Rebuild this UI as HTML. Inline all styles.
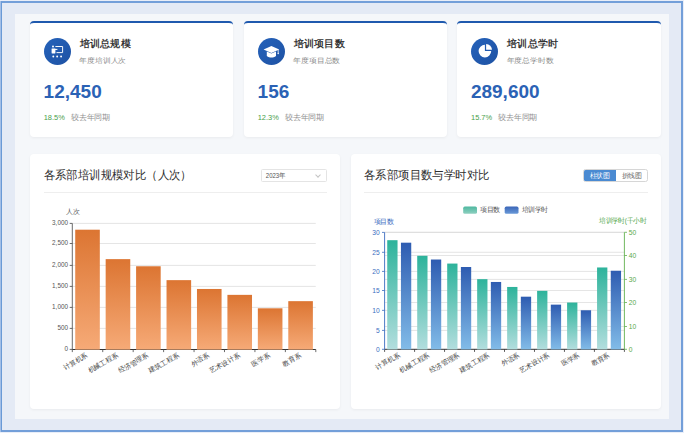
<!DOCTYPE html>
<html><head><meta charset="utf-8"><style>
html,body{margin:0;padding:0;background:#e9eef8;width:684px;height:433px;overflow:hidden;font-family:"Liberation Sans", sans-serif;}
.frame{position:absolute;left:1px;top:1px;width:682px;height:431px;box-sizing:border-box;border:2px solid #739fd9;border-left:1px solid #6a9ad6;box-shadow:-1px 0 0 #a3bfe7;background:#e4eaf5;}
.cont{position:absolute;left:14.5px;top:14px;width:654px;height:404.5px;background:#f5f7fa;}
.card{position:absolute;top:21px;height:115.8px;background:#fff;border-radius:4px;box-sizing:border-box;border-top:2px solid #1f59ae;box-shadow:0 1px 3px rgba(0,0,0,0.05);}
.ic{position:absolute;left:13.5px;top:15.2px;width:27px;height:27px;}
.ic svg{display:block}
.panel{position:absolute;top:153.7px;height:255px;background:#fff;border-radius:4px;box-shadow:0 1px 3px rgba(0,0,0,0.05);}
.sep{position:absolute;left:13.5px;top:38.5px;height:1px;background:#eeeeee;}
.sel{position:absolute;left:230.9px;top:15.5px;width:66px;height:12.6px;box-sizing:border-box;border:1px solid #e4e4e4;border-radius:1.5px;}
.chev{position:absolute;right:6.2px;top:2.4px;width:3px;height:3px;border-right:0.6px solid #c4c4c4;border-bottom:0.6px solid #c4c4c4;transform:rotate(45deg);}
.tg{position:absolute;left:232.6px;top:15.5px;width:64.6px;height:12.6px;box-sizing:border-box;border:1px solid #d6d6d6;border-radius:2.5px;overflow:hidden;}
.tg .a{position:absolute;left:0;top:0;width:31.5px;height:100%;background:#4a8ad2;}
.ov{position:absolute;left:0;top:0;}
.t{position:absolute;left:0;top:0;transform-origin:0 0;white-space:nowrap;line-height:1;}
</style></head><body>
<svg width="0" height="0" style="position:absolute"><defs><linearGradient id="icg" x1="0" y1="0" x2="1" y2="1"><stop offset="0" stop-color="#2562ba"/><stop offset="1" stop-color="#1e52a4"/></linearGradient></defs></svg>
<div class="frame"></div>
<div class="cont"></div>
<div class="card" style="left:30px;width:203px"><div class="ic"><svg width="27" height="27" viewBox="0 0 27 27"><circle cx="13.5" cy="13.5" r="13.5" fill="url(#icg)"/>
<circle cx="9.0" cy="8.5" r="1.0" fill="#fff"/><rect x="7.6" y="10.4" width="3.8" height="5.0" rx="0.4" fill="#fff"/>
<path d="M11.4 8.5H18.6V14.6H12.5" fill="none" stroke="#fff" stroke-width="0.95"/>
<rect x="10.8" y="10.9" width="2.6" height="1.0" fill="#fff"/>
<circle cx="9.3" cy="18.5" r="0.95" fill="#fff"/><circle cx="13.15" cy="18.5" r="0.95" fill="#fff"/><circle cx="17.1" cy="18.5" r="0.95" fill="#fff"/></svg></div></div><div class="card" style="left:244px;width:202.5px"><div class="ic"><svg width="27" height="27" viewBox="0 0 27 27"><circle cx="13.5" cy="13.5" r="13.5" fill="url(#icg)"/>
<path d="M13.4 8.0L21.2 11.4L13.4 14.9L5.6 11.4Z" fill="#fff"/>
<path d="M8.8 13.4V18.0C10.2 19.1 11.8 19.5 13.4 19.5S16.6 19.1 18.0 18.0V13.4L13.4 15.5Z" fill="#fff"/>
<path d="M20.2 11.6V15.2" stroke="#fff" stroke-width="0.8"/><circle cx="20.2" cy="15.5" r="0.75" fill="#fff"/></svg></div></div><div class="card" style="left:457.3px;width:204px"><div class="ic"><svg width="27" height="27" viewBox="0 0 27 27"><circle cx="13.5" cy="13.5" r="13.5" fill="url(#icg)"/>
<path d="M13.9 6.8A6.3 6.3 0 1 0 20.2 13.1H13.9Z" fill="#fff"/>
<path d="M15.1 5.9A5.9 5.9 0 0 1 21.0 11.8H15.1Z" fill="#fff"/></svg></div></div>
<div class="panel" style="left:30.3px;width:309.7px">
  <div class="sep" style="width:283.5px"></div>
  <div class="sel"><div class="chev"></div></div>
</div>
<div class="panel" style="left:350.8px;width:310.6px">
  <div class="sep" style="width:283.5px"></div>
  <div class="tg"><div class="a"></div></div>
</div>
<svg class="ov" width="684" height="433" viewBox="0 0 684 433" font-family='"Liberation Sans", sans-serif'>
<defs>
<linearGradient id="og" x1="0" y1="0" x2="0" y2="1"><stop offset="0" stop-color="#dc7532"/><stop offset="1" stop-color="#f6aa77"/></linearGradient>
<linearGradient id="tg" x1="0" y1="0" x2="0" y2="1"><stop offset="0" stop-color="#2db39b"/><stop offset="1" stop-color="#b3dede"/></linearGradient>
<linearGradient id="bg" x1="0" y1="0" x2="0" y2="1"><stop offset="0" stop-color="#2e5cb1"/><stop offset="1" stop-color="#82bce8"/></linearGradient>
<linearGradient id="tgh" x1="0" y1="0" x2="0" y2="1"><stop offset="0" stop-color="#4fb8a0"/><stop offset="1" stop-color="#8fd0c0"/></linearGradient>
<linearGradient id="bgh" x1="0" y1="0" x2="0" y2="1"><stop offset="0" stop-color="#3b66b8"/><stop offset="1" stop-color="#6a9ad8"/></linearGradient>
</defs>
<line x1="72.3" y1="328.40" x2="315.8" y2="328.40" stroke="#dadada" stroke-width="0.7"/><line x1="72.3" y1="307.40" x2="315.8" y2="307.40" stroke="#dadada" stroke-width="0.7"/><line x1="72.3" y1="286.40" x2="315.8" y2="286.40" stroke="#dadada" stroke-width="0.7"/><line x1="72.3" y1="265.40" x2="315.8" y2="265.40" stroke="#dadada" stroke-width="0.7"/><line x1="72.3" y1="243.50" x2="315.8" y2="243.50" stroke="#dadada" stroke-width="0.7"/><line x1="72.3" y1="223.40" x2="315.8" y2="223.40" stroke="#dadada" stroke-width="0.7"/><line x1="72.3" y1="349.5" x2="315.8" y2="349.5" stroke="#333" stroke-width="1.0"/><rect x="75.22" y="229.70" width="24.6" height="119.90" fill="url(#og)"/><rect x="105.66" y="259.13" width="24.6" height="90.47" fill="url(#og)"/><rect x="136.09" y="266.27" width="24.6" height="83.33" fill="url(#og)"/><rect x="166.53" y="280.14" width="24.6" height="69.46" fill="url(#og)"/><rect x="196.97" y="288.97" width="24.6" height="60.63" fill="url(#og)"/><rect x="227.41" y="294.86" width="24.6" height="54.74" fill="url(#og)"/><rect x="257.84" y="308.31" width="24.6" height="41.29" fill="url(#og)"/><rect x="288.28" y="301.16" width="24.6" height="48.44" fill="url(#og)"/><line x1="72.3" y1="223.4" x2="72.3" y2="349.5" stroke="#444" stroke-width="0.8"/><line x1="69.7" y1="349.40" x2="72.3" y2="349.40" stroke="#444" stroke-width="0.8"/><line x1="69.7" y1="328.40" x2="72.3" y2="328.40" stroke="#444" stroke-width="0.8"/><line x1="69.7" y1="307.40" x2="72.3" y2="307.40" stroke="#444" stroke-width="0.8"/><line x1="69.7" y1="286.40" x2="72.3" y2="286.40" stroke="#444" stroke-width="0.8"/><line x1="69.7" y1="265.40" x2="72.3" y2="265.40" stroke="#444" stroke-width="0.8"/><line x1="69.7" y1="243.50" x2="72.3" y2="243.50" stroke="#444" stroke-width="0.8"/><line x1="69.7" y1="223.40" x2="72.3" y2="223.40" stroke="#444" stroke-width="0.8"/><line x1="72.30" y1="349.5" x2="72.30" y2="352.1" stroke="#444" stroke-width="0.8"/><line x1="102.74" y1="349.5" x2="102.74" y2="352.1" stroke="#444" stroke-width="0.8"/><line x1="133.18" y1="349.5" x2="133.18" y2="352.1" stroke="#444" stroke-width="0.8"/><line x1="163.61" y1="349.5" x2="163.61" y2="352.1" stroke="#444" stroke-width="0.8"/><line x1="194.05" y1="349.5" x2="194.05" y2="352.1" stroke="#444" stroke-width="0.8"/><line x1="224.49" y1="349.5" x2="224.49" y2="352.1" stroke="#444" stroke-width="0.8"/><line x1="254.93" y1="349.5" x2="254.93" y2="352.1" stroke="#444" stroke-width="0.8"/><line x1="285.36" y1="349.5" x2="285.36" y2="352.1" stroke="#444" stroke-width="0.8"/><line x1="315.80" y1="349.5" x2="315.80" y2="352.1" stroke="#444" stroke-width="0.8"/>
<line x1="384.6" y1="330.40" x2="624.4" y2="330.40" stroke="#dadada" stroke-width="0.7"/><line x1="384.6" y1="310.35" x2="624.4" y2="310.35" stroke="#dadada" stroke-width="0.7"/><line x1="384.6" y1="290.50" x2="624.4" y2="290.50" stroke="#dadada" stroke-width="0.7"/><line x1="384.6" y1="271.40" x2="624.4" y2="271.40" stroke="#dadada" stroke-width="0.7"/><line x1="384.6" y1="252.30" x2="624.4" y2="252.30" stroke="#dadada" stroke-width="0.7"/><line x1="384.6" y1="232.40" x2="624.4" y2="232.40" stroke="#dadada" stroke-width="0.7"/><line x1="384.6" y1="326.50" x2="624.4" y2="326.50" stroke="#dadada" stroke-width="0.7"/><line x1="384.6" y1="302.50" x2="624.4" y2="302.50" stroke="#dadada" stroke-width="0.7"/><line x1="384.6" y1="279.40" x2="624.4" y2="279.40" stroke="#dadada" stroke-width="0.7"/><line x1="384.6" y1="255.50" x2="624.4" y2="255.50" stroke="#dadada" stroke-width="0.7"/><line x1="384.6" y1="232.30" x2="624.4" y2="232.30" stroke="#dadada" stroke-width="0.7"/><line x1="384.6" y1="349.3" x2="624.4" y2="349.3" stroke="#333" stroke-width="1.0"/><rect x="387.24" y="240.19" width="10.3" height="109.21" fill="url(#tg)"/><rect x="400.94" y="242.69" width="10.3" height="106.71" fill="url(#bg)"/><rect x="417.21" y="255.78" width="10.3" height="93.62" fill="url(#tg)"/><rect x="430.91" y="259.52" width="10.3" height="89.88" fill="url(#bg)"/><rect x="447.19" y="263.57" width="10.3" height="85.83" fill="url(#tg)"/><rect x="460.89" y="267.00" width="10.3" height="82.40" fill="url(#bg)"/><rect x="477.16" y="279.16" width="10.3" height="70.24" fill="url(#tg)"/><rect x="490.86" y="281.97" width="10.3" height="67.43" fill="url(#bg)"/><rect x="507.14" y="286.95" width="10.3" height="62.45" fill="url(#tg)"/><rect x="520.84" y="296.69" width="10.3" height="52.71" fill="url(#bg)"/><rect x="537.11" y="290.85" width="10.3" height="58.55" fill="url(#tg)"/><rect x="550.81" y="304.64" width="10.3" height="44.76" fill="url(#bg)"/><rect x="567.09" y="302.54" width="10.3" height="46.86" fill="url(#tg)"/><rect x="580.79" y="310.26" width="10.3" height="39.14" fill="url(#bg)"/><rect x="597.06" y="267.47" width="10.3" height="81.93" fill="url(#tg)"/><rect x="610.76" y="270.74" width="10.3" height="78.66" fill="url(#bg)"/><line x1="384.60" y1="349.3" x2="384.60" y2="351.90000000000003" stroke="#333" stroke-width="0.8"/><line x1="414.58" y1="349.3" x2="414.58" y2="351.90000000000003" stroke="#333" stroke-width="0.8"/><line x1="444.55" y1="349.3" x2="444.55" y2="351.90000000000003" stroke="#333" stroke-width="0.8"/><line x1="474.52" y1="349.3" x2="474.52" y2="351.90000000000003" stroke="#333" stroke-width="0.8"/><line x1="504.50" y1="349.3" x2="504.50" y2="351.90000000000003" stroke="#333" stroke-width="0.8"/><line x1="534.48" y1="349.3" x2="534.48" y2="351.90000000000003" stroke="#333" stroke-width="0.8"/><line x1="564.45" y1="349.3" x2="564.45" y2="351.90000000000003" stroke="#333" stroke-width="0.8"/><line x1="594.42" y1="349.3" x2="594.42" y2="351.90000000000003" stroke="#333" stroke-width="0.8"/><line x1="624.40" y1="349.3" x2="624.40" y2="351.90000000000003" stroke="#333" stroke-width="0.8"/><line x1="384.6" y1="232.4" x2="384.6" y2="349.3" stroke="#3a6cc0" stroke-width="0.9"/><line x1="624.4" y1="232.4" x2="624.4" y2="349.3" stroke="#62b04e" stroke-width="0.9"/><line x1="382.0" y1="349.30" x2="384.6" y2="349.30" stroke="#3a6cc0" stroke-width="0.8"/><line x1="382.0" y1="330.40" x2="384.6" y2="330.40" stroke="#3a6cc0" stroke-width="0.8"/><line x1="382.0" y1="310.35" x2="384.6" y2="310.35" stroke="#3a6cc0" stroke-width="0.8"/><line x1="382.0" y1="290.50" x2="384.6" y2="290.50" stroke="#3a6cc0" stroke-width="0.8"/><line x1="382.0" y1="271.40" x2="384.6" y2="271.40" stroke="#3a6cc0" stroke-width="0.8"/><line x1="382.0" y1="252.30" x2="384.6" y2="252.30" stroke="#3a6cc0" stroke-width="0.8"/><line x1="382.0" y1="232.40" x2="384.6" y2="232.40" stroke="#3a6cc0" stroke-width="0.8"/><line x1="624.4" y1="349.30" x2="627.0" y2="349.30" stroke="#62b04e" stroke-width="0.8"/><line x1="624.4" y1="326.50" x2="627.0" y2="326.50" stroke="#62b04e" stroke-width="0.8"/><line x1="624.4" y1="302.50" x2="627.0" y2="302.50" stroke="#62b04e" stroke-width="0.8"/><line x1="624.4" y1="279.40" x2="627.0" y2="279.40" stroke="#62b04e" stroke-width="0.8"/><line x1="624.4" y1="255.50" x2="627.0" y2="255.50" stroke="#62b04e" stroke-width="0.8"/><line x1="624.4" y1="232.30" x2="627.0" y2="232.30" stroke="#62b04e" stroke-width="0.8"/><rect x="463.2" y="206.6" width="13.8" height="7.2" rx="1.6" fill="url(#tgh)"/><rect x="504.7" y="206.6" width="13.8" height="7.2" rx="1.6" fill="url(#bgh)"/>
</svg>
<div class="t" style="font-size:41.2px;color:#333;font-weight:bold;transform:translate(79.70px,47.60px) scale(0.2500,0.2500) translate(0,-85%)">培训总规模</div><div class="t" style="font-size:28.0px;color:#8a8a8a;transform:translate(79.30px,63.30px) scale(0.2787,0.2500) translate(0,-85%)">年度培训人次</div><div class="t" style="font-size:76.0px;color:#2b62b5;font-weight:bold;transform:translate(43.60px,98.10px) scale(0.2500,0.2500) translate(0,-85%)">12,450</div><div class="t" style="font-size:32.4px;color:#4aa04c;transform:translate(43.70px,120.10px) scale(0.2300,0.2500) translate(0,-85%)">18.5%</div><div class="t" style="font-size:30.8px;color:#909090;transform:translate(71.00px,120.30px) scale(0.2500,0.2500) translate(0,-85%)">较去年同期</div><div class="t" style="font-size:41.2px;color:#333;font-weight:bold;transform:translate(293.70px,47.60px) scale(0.2500,0.2500) translate(0,-85%)">培训项目数</div><div class="t" style="font-size:28.0px;color:#8a8a8a;transform:translate(293.30px,63.30px) scale(0.2787,0.2500) translate(0,-85%)">年度项目总数</div><div class="t" style="font-size:76.0px;color:#2b62b5;font-weight:bold;transform:translate(257.60px,98.10px) scale(0.2500,0.2500) translate(0,-85%)">156</div><div class="t" style="font-size:32.4px;color:#4aa04c;transform:translate(257.70px,120.10px) scale(0.2300,0.2500) translate(0,-85%)">12.3%</div><div class="t" style="font-size:30.8px;color:#909090;transform:translate(285.00px,120.30px) scale(0.2500,0.2500) translate(0,-85%)">较去年同期</div><div class="t" style="font-size:41.2px;color:#333;font-weight:bold;transform:translate(507.00px,47.60px) scale(0.2500,0.2500) translate(0,-85%)">培训总学时</div><div class="t" style="font-size:28.0px;color:#8a8a8a;transform:translate(506.60px,63.30px) scale(0.2787,0.2500) translate(0,-85%)">年度总学时数</div><div class="t" style="font-size:76.0px;color:#2b62b5;font-weight:bold;transform:translate(470.90px,98.10px) scale(0.2500,0.2500) translate(0,-85%)">289,600</div><div class="t" style="font-size:32.4px;color:#4aa04c;transform:translate(471.00px,120.10px) scale(0.2300,0.2500) translate(0,-85%)">15.7%</div><div class="t" style="font-size:30.8px;color:#909090;transform:translate(498.30px,120.30px) scale(0.2500,0.2500) translate(0,-85%)">较去年同期</div><div class="t" style="font-size:47.6px;color:#2f2f2f;font-weight:500;transform:translate(43.60px,178.90px) scale(0.2375,0.2500) translate(0,-85%)">各系部培训规模对比（人次）</div><div class="t" style="font-size:47.6px;color:#2f2f2f;font-weight:500;transform:translate(364.00px,178.90px) scale(0.2375,0.2500) translate(0,-85%)">各系部项目数与学时对比</div><div class="t" style="font-size:26.0px;color:#555;transform:translate(265.80px,177.70px) scale(0.2300,0.2500) translate(0,-85%)">2023年</div><div class="t" style="font-size:26.4px;color:#fff;font-weight:500;transform:translate(599.60px,178.10px) scale(0.2500,0.2500) translate(-50%,-85%)">柱状图</div><div class="t" style="font-size:26.4px;color:#666;transform:translate(631.40px,178.10px) scale(0.2500,0.2500) translate(-50%,-85%)">折线图</div><div class="t" style="font-size:29.6px;color:#555;transform:translate(68.00px,351.10px) scale(0.2150,0.2500) translate(-100%,-85%)">0</div><div class="t" style="font-size:29.6px;color:#555;transform:translate(68.00px,330.10px) scale(0.2150,0.2500) translate(-100%,-85%)">500</div><div class="t" style="font-size:29.6px;color:#555;transform:translate(68.00px,309.10px) scale(0.2150,0.2500) translate(-100%,-85%)">1,000</div><div class="t" style="font-size:29.6px;color:#555;transform:translate(68.00px,288.10px) scale(0.2150,0.2500) translate(-100%,-85%)">1,500</div><div class="t" style="font-size:29.6px;color:#555;transform:translate(68.00px,267.10px) scale(0.2150,0.2500) translate(-100%,-85%)">2,000</div><div class="t" style="font-size:29.6px;color:#555;transform:translate(68.00px,245.20px) scale(0.2150,0.2500) translate(-100%,-85%)">2,500</div><div class="t" style="font-size:29.6px;color:#555;transform:translate(68.00px,225.10px) scale(0.2150,0.2500) translate(-100%,-85%)">3,000</div><div class="t" style="font-size:27.2px;color:#444;font-weight:500;transform:translate(88.32px,356.50px) rotate(-30deg) scale(0.2500,0.2500) translate(-100%,-85%)">计算机系</div><div class="t" style="font-size:27.2px;color:#444;font-weight:500;transform:translate(118.76px,356.50px) rotate(-30deg) scale(0.2500,0.2500) translate(-100%,-85%)">机械工程系</div><div class="t" style="font-size:27.2px;color:#444;font-weight:500;transform:translate(149.19px,356.50px) rotate(-30deg) scale(0.2500,0.2500) translate(-100%,-85%)">经济管理系</div><div class="t" style="font-size:27.2px;color:#444;font-weight:500;transform:translate(179.63px,356.50px) rotate(-30deg) scale(0.2500,0.2500) translate(-100%,-85%)">建筑工程系</div><div class="t" style="font-size:27.2px;color:#444;font-weight:500;transform:translate(210.07px,356.50px) rotate(-30deg) scale(0.2500,0.2500) translate(-100%,-85%)">外语系</div><div class="t" style="font-size:27.2px;color:#444;font-weight:500;transform:translate(240.51px,356.50px) rotate(-30deg) scale(0.2500,0.2500) translate(-100%,-85%)">艺术设计系</div><div class="t" style="font-size:27.2px;color:#444;font-weight:500;transform:translate(270.94px,356.50px) rotate(-30deg) scale(0.2500,0.2500) translate(-100%,-85%)">医学系</div><div class="t" style="font-size:27.2px;color:#444;font-weight:500;transform:translate(301.38px,356.50px) rotate(-30deg) scale(0.2500,0.2500) translate(-100%,-85%)">教育系</div><div class="t" style="font-size:26.0px;color:#555;font-weight:500;transform:translate(66.00px,213.60px) scale(0.2500,0.2500) translate(0,-85%)">人次</div><div class="t" style="font-size:30.4px;color:#3a6cc0;transform:translate(379.80px,351.70px) scale(0.2200,0.2500) translate(-100%,-85%)">0</div><div class="t" style="font-size:30.4px;color:#3a6cc0;transform:translate(379.80px,332.80px) scale(0.2200,0.2500) translate(-100%,-85%)">5</div><div class="t" style="font-size:30.4px;color:#3a6cc0;transform:translate(379.80px,312.75px) scale(0.2200,0.2500) translate(-100%,-85%)">10</div><div class="t" style="font-size:30.4px;color:#3a6cc0;transform:translate(379.80px,292.90px) scale(0.2200,0.2500) translate(-100%,-85%)">15</div><div class="t" style="font-size:30.4px;color:#3a6cc0;transform:translate(379.80px,273.80px) scale(0.2200,0.2500) translate(-100%,-85%)">20</div><div class="t" style="font-size:30.4px;color:#3a6cc0;transform:translate(379.80px,254.70px) scale(0.2200,0.2500) translate(-100%,-85%)">25</div><div class="t" style="font-size:30.4px;color:#3a6cc0;transform:translate(379.80px,234.80px) scale(0.2200,0.2500) translate(-100%,-85%)">30</div><div class="t" style="font-size:30.4px;color:#5aa84a;transform:translate(628.80px,351.70px) scale(0.2200,0.2500) translate(0,-85%)">0</div><div class="t" style="font-size:30.4px;color:#5aa84a;transform:translate(628.80px,328.90px) scale(0.2200,0.2500) translate(0,-85%)">10</div><div class="t" style="font-size:30.4px;color:#5aa84a;transform:translate(628.80px,304.90px) scale(0.2200,0.2500) translate(0,-85%)">20</div><div class="t" style="font-size:30.4px;color:#5aa84a;transform:translate(628.80px,281.80px) scale(0.2200,0.2500) translate(0,-85%)">30</div><div class="t" style="font-size:30.4px;color:#5aa84a;transform:translate(628.80px,257.90px) scale(0.2200,0.2500) translate(0,-85%)">40</div><div class="t" style="font-size:30.4px;color:#5aa84a;transform:translate(628.80px,234.70px) scale(0.2200,0.2500) translate(0,-85%)">50</div><div class="t" style="font-size:27.2px;color:#444;font-weight:500;transform:translate(400.39px,356.30px) rotate(-30deg) scale(0.2500,0.2500) translate(-100%,-85%)">计算机系</div><div class="t" style="font-size:27.2px;color:#444;font-weight:500;transform:translate(430.36px,356.30px) rotate(-30deg) scale(0.2500,0.2500) translate(-100%,-85%)">机械工程系</div><div class="t" style="font-size:27.2px;color:#444;font-weight:500;transform:translate(460.34px,356.30px) rotate(-30deg) scale(0.2500,0.2500) translate(-100%,-85%)">经济管理系</div><div class="t" style="font-size:27.2px;color:#444;font-weight:500;transform:translate(490.31px,356.30px) rotate(-30deg) scale(0.2500,0.2500) translate(-100%,-85%)">建筑工程系</div><div class="t" style="font-size:27.2px;color:#444;font-weight:500;transform:translate(520.29px,356.30px) rotate(-30deg) scale(0.2500,0.2500) translate(-100%,-85%)">外语系</div><div class="t" style="font-size:27.2px;color:#444;font-weight:500;transform:translate(550.26px,356.30px) rotate(-30deg) scale(0.2500,0.2500) translate(-100%,-85%)">艺术设计系</div><div class="t" style="font-size:27.2px;color:#444;font-weight:500;transform:translate(580.24px,356.30px) rotate(-30deg) scale(0.2500,0.2500) translate(-100%,-85%)">医学系</div><div class="t" style="font-size:27.2px;color:#444;font-weight:500;transform:translate(610.21px,356.30px) rotate(-30deg) scale(0.2500,0.2500) translate(-100%,-85%)">教育系</div><div class="t" style="font-size:26.0px;color:#3a6cc0;font-weight:500;transform:translate(373.90px,223.60px) scale(0.2500,0.2500) translate(0,-85%)">项目数</div><div class="t" style="font-size:26.0px;color:#4fa64a;font-weight:500;transform:translate(599.30px,222.70px) scale(0.2450,0.2500) translate(0,-85%)">培训学时(千小时</div><div class="t" style="font-size:26.0px;color:#555;font-weight:500;transform:translate(480.20px,212.50px) scale(0.2500,0.2500) translate(0,-85%)">项目数</div><div class="t" style="font-size:26.0px;color:#555;font-weight:500;transform:translate(521.60px,212.50px) scale(0.2500,0.2500) translate(0,-85%)">培训学时</div>
</body></html>
